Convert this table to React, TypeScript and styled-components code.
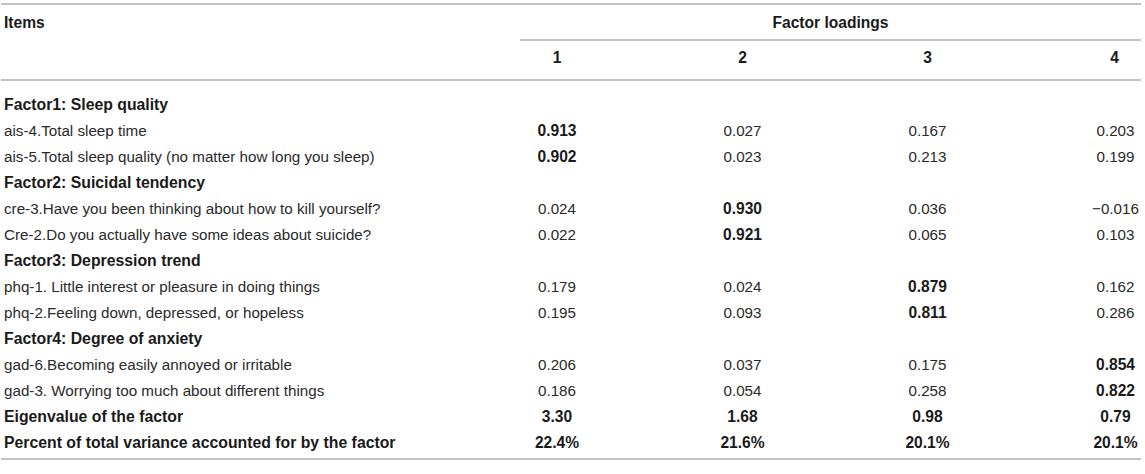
import styled, { createGlobalStyle } from 'styled-components';

const GlobalStyle = createGlobalStyle`
  html, body {
    margin: 0;
    padding: 0;
    background: #ffffff;
  }
  body {
    font-family: "Liberation Sans", Arial, sans-serif;
    color: #222;
  }
`;

type Row = {
  label: string;
  values?: string[];
  bold?: number[];
  heading?: boolean;
  allBold?: boolean;
};

const rows: Row[] = [
  { label: 'Factor1: Sleep quality', heading: true },
  { label: 'ais-4.Total sleep time', values: ['0.913', '0.027', '0.167', '0.203'], bold: [0] },
  { label: 'ais-5.Total sleep quality (no matter how long you sleep)', values: ['0.902', '0.023', '0.213', '0.199'], bold: [0] },
  { label: 'Factor2: Suicidal tendency', heading: true },
  { label: 'cre-3.Have you been thinking about how to kill yourself?', values: ['0.024', '0.930', '0.036', '\u22120.016'], bold: [1] },
  { label: 'Cre-2.Do you actually have some ideas about suicide?', values: ['0.022', '0.921', '0.065', '0.103'], bold: [1] },
  { label: 'Factor3: Depression trend', heading: true },
  { label: 'phq-1. Little interest or pleasure in doing things', values: ['0.179', '0.024', '0.879', '0.162'], bold: [2] },
  { label: 'phq-2.Feeling down, depressed, or hopeless', values: ['0.195', '0.093', '0.811', '0.286'], bold: [2] },
  { label: 'Factor4: Degree of anxiety', heading: true },
  { label: 'gad-6.Becoming easily annoyed or irritable', values: ['0.206', '0.037', '0.175', '0.854'], bold: [3] },
  { label: 'gad-3. Worrying too much about different things', values: ['0.186', '0.054', '0.258', '0.822'], bold: [3] },
  { label: 'Eigenvalue of the factor', values: ['3.30', '1.68', '0.98', '0.79'], allBold: true },
  { label: 'Percent of total variance accounted for by the factor', values: ['22.4%', '21.6%', '20.1%', '20.1%'], allBold: true },
];

const columns = '463px 186px 185px 185px 1fr';

const Page = styled.div`
  padding: 3px 0 0 1px;
  width: 1140px;
`;

const Table = styled.div`
  width: 1140px;
  border-top: 2px solid #c2c2c2;
  border-bottom: 2px solid #c2c2c2;
  font-size: 15px;
`;

const Head = styled.div`
  display: grid;
  grid-template-columns: ${columns};
  grid-template-rows: 36px 38px;
  border-bottom: 2px solid #c2c2c2;
  font-weight: bold;
  font-size: 15.6px;
  color: #1a1a1a;
`;

const ItemsHead = styled.div`
  grid-row: 1 / span 2;
  grid-column: 1;
  padding: 9px 0 0 3px;
  line-height: 18px;
`;

const SpanHead = styled.div`
  grid-row: 1;
  grid-column: 2 / -1;
  margin-left: 56px;
  border-bottom: 2px solid #c2c2c2;
  text-align: center;
  padding-top: 9px;
  line-height: 18px;
  box-sizing: border-box;
`;

const NumHead = styled.div<{ $last?: boolean }>`
  grid-row: 2;
  text-align: center;
  padding: 8px 0 0 ${(p) => (p.$last ? '68px' : '0')};
  line-height: 18px;
`;

const Body = styled.div`
  padding: 11px 0 2px;
`;

const BodyRow = styled.div`
  display: grid;
  grid-template-columns: ${columns};
  height: 26px;
  line-height: 26px;
`;

const Label = styled.div<{ $bold?: boolean }>`
  padding-left: 3px;
  white-space: nowrap;
  font-weight: ${(p) => (p.$bold ? 'bold' : 'normal')};
  font-size: ${(p) => (p.$bold ? '15.8px' : '15.2px')};
  color: ${(p) => (p.$bold ? '#1a1a1a' : '#2a2a2a')};
`;

const Value = styled.div<{ $bold?: boolean; $last?: boolean }>`
  text-align: center;
  white-space: nowrap;
  padding-left: ${(p) => (p.$last ? '70px' : '0')};
  font-weight: ${(p) => (p.$bold ? 'bold' : 'normal')};
  font-size: ${(p) => (p.$bold ? '15.6px' : '15.2px')};
  color: ${(p) => (p.$bold ? '#1a1a1a' : '#2a2a2a')};
`;

export default function App() {
  return (
    <>
      <GlobalStyle />
      <Page>
        <Table>
          <Head>
            <ItemsHead>Items</ItemsHead>
            <SpanHead>Factor loadings</SpanHead>
            {['1', '2', '3', '4'].map((n, i) => (
              <NumHead key={n} $last={i === 3} style={{ gridColumn: i + 2 }}>
                {n}
              </NumHead>
            ))}
          </Head>
          <Body>
            {rows.map((r) => (
              <BodyRow key={r.label}>
                <Label $bold={r.heading || r.allBold}>{r.label}</Label>
                {r.values?.map((v, i) => (
                  <Value key={i} $last={i === 3} $bold={r.allBold || r.bold?.includes(i)}>
                    {v}
                  </Value>
                ))}
              </BodyRow>
            ))}
          </Body>
        </Table>
      </Page>
    </>
  );
}
